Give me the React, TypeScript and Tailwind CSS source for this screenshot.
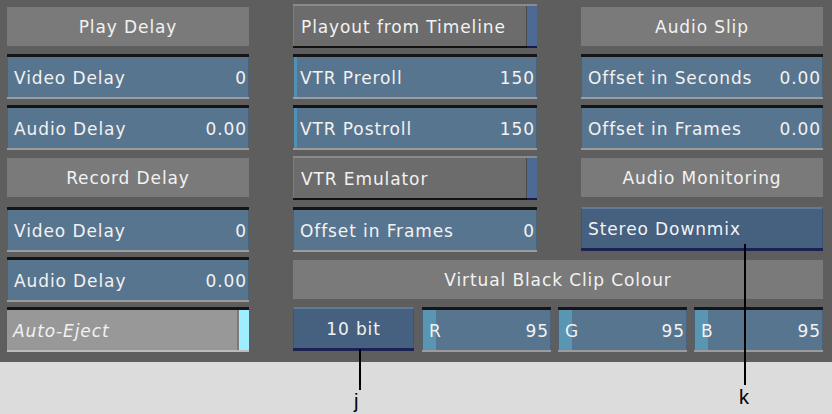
import React, { ReactNode } from "react";

const ui =
  "font-['DejaVu_Sans',sans-serif] text-[17px] tracking-[0.9px] text-[#f2f2f2]";

/** Grey section title bar. */
function Header({ children }: { children: ReactNode }) {
  return (
    <div className="mt-[3px] h-[39px] pt-[2px] bg-[#7a7a7a] flex items-center justify-center">
      {children}
    </div>
  );
}

type FieldProps = {
  label: string;
  value: string;
  fill?: "thin" | "wide";
};

/** Numeric field: blue body, black top edge, light bottom edge. */
function Field({ label, value, fill }: FieldProps) {
  const bg =
    fill === "thin"
      ? "bg-[linear-gradient(to_right,#4f90b3_3px,#58758f_3px)]"
      : fill === "wide"
        ? "bg-[linear-gradient(to_right,#5a95b1_13px,#58758f_13px)]"
        : "bg-[#58758f]";
  return (
    <div className="h-[45px] flex flex-col">
      <div className="h-[3px] bg-[#151515]" />
      <div
        className={`flex-1 flex items-center justify-between pt-[4px] pl-[6px] pr-[2px] border-x border-[#4b6279] ${bg}`}
      >
        <span>{label}</span>
        <span className="-mr-[1px]">{value}</span>
      </div>
      <div className="h-[2px] bg-[#9c9c9c]" />
    </div>
  );
}

/** Grey toggle with a blue state strip on the right. */
function Toggle({ label }: { label: string }) {
  return (
    <div className="h-[44px] flex flex-col">
      <div className="flex-1 flex border-t-2 border-[#8a8a8a]">
        <div className="flex-1 flex items-center pt-[3px] pl-[7px] bg-[#6c6c6c] border-l border-[#7c7c7c] border-r border-r-[#4a4a4a]">
          {label}
        </div>
        <div className="w-[10px] bg-[#4c6a93]" />
      </div>
      <div className="h-[2px] flex">
        <div className="flex-1 bg-[#121212]" />
        <div className="w-[10px] bg-[#16184a]" />
      </div>
    </div>
  );
}

/** Blue push button. */
function Button({
  label,
  center,
  className = "",
}: {
  label: string;
  center?: boolean;
  className?: string;
}) {
  return (
    <div className={`h-[44px] flex flex-col ${className}`}>
      <div
        className={`flex-1 flex items-center pt-[3px] bg-[#46607f] border-t-2 border-[#5f7b9c] border-x border-x-[#3d5573] ${
          center ? "justify-center" : "pl-[6px]"
        }`}
      >
        {label}
      </div>
      <div className="h-[3px] bg-[#1b2150]" />
    </div>
  );
}

function AutoEject() {
  return (
    <div className="h-[45px] flex flex-col">
      <div className="h-[3px] bg-[#151515]" />
      <div className="flex-1 flex">
        <div className="flex-1 flex items-center pt-[3px] pl-[6px] bg-[#989898] italic border-r-2 border-[#7a7a7a]">
          Auto-Eject
        </div>
        <div className="w-[10px] bg-[#9feeff]" />
      </div>
      <div className="h-[2px] bg-[#bcbcbc]" />
    </div>
  );
}

export default function App() {
  return (
    <div className="relative w-[832px] h-[414px] bg-[#dcdcdc]">
      <div
        className={`h-[362px] bg-[#5e5e5e] pt-[4px] pl-[7px] grid grid-cols-[242px_244px_242px] grid-rows-[50px_51px_50px_52px_50px_50px_50px] gap-x-[44px] ${ui}`}
      >
        {/* row 1 */}
        <Header>Play Delay</Header>
        <Toggle label="Playout from Timeline" />
        <Header>Audio Slip</Header>

        {/* row 2 */}
        <Field label="Video Delay" value="0" />
        <Field label="VTR Preroll" value="150" fill="thin" />
        <Field label="Offset in Seconds" value="0.00" />

        {/* row 3 */}
        <Field label="Audio Delay" value="0.00" />
        <Field label="VTR Postroll" value="150" fill="thin" />
        <Field label="Offset in Frames" value="0.00" />

        {/* row 4 */}
        <Header>Record Delay</Header>
        <div className="pt-[1px]">
          <Toggle label="VTR Emulator" />
        </div>
        <Header>Audio Monitoring</Header>

        {/* row 5 */}
        <Field label="Video Delay" value="0" />
        <Field label="Offset in Frames" value="0" />
        <Button label="Stereo Downmix" />

        {/* row 6 */}
        <Field label="Audio Delay" value="0.00" />
        <div className="col-span-2">
          <Header>Virtual Black Clip Colour</Header>
        </div>

        {/* row 7 */}
        <AutoEject />
        <div className="col-span-2 flex gap-[7px]">
          <Button label="10 bit" center className="w-[121px] mr-[1px]" />
          <div className="w-[129px]">
            <Field label="R" value="95" fill="wide" />
          </div>
          <div className="w-[129px]">
            <Field label="G" value="95" fill="wide" />
          </div>
          <div className="w-[129px]">
            <Field label="B" value="95" fill="wide" />
          </div>
        </div>
      </div>

      {/* callouts */}
      <div className="absolute left-[359px] top-[349px] w-[2px] h-[41px] bg-black" />
      <div className="absolute left-[354px] top-[386px] font-['Liberation_Sans',sans-serif] text-[20px] text-black">
        j
      </div>
      <div className="absolute left-[744px] top-[244px] w-[2px] h-[141px] bg-black" />
      <div className="absolute left-[739px] top-[382px] font-['Liberation_Sans',sans-serif] text-[20px] text-black">
        k
      </div>
    </div>
  );
}
